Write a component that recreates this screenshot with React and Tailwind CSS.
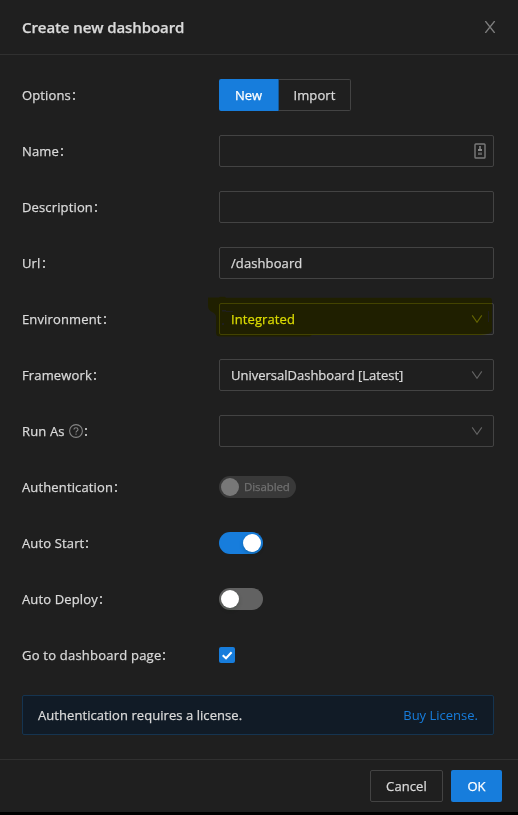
import React from "react";

function Row({ label, track = "tracking-[0.14px]", children }) {
  return (
    <div className="flex h-8 items-center">
      <div className="flex w-[197px] shrink-0 items-center">
        <span className={`whitespace-nowrap ${track}`}>{label}</span>
        <Colon />
      </div>
      {children}
    </div>
  );
}

function Colon() {
  return (
    <span className="ml-[2px] mt-[2px] flex flex-col gap-[4px]" aria-label=":">
      <i className="block h-[2px] w-[2px] bg-[#b4b4b4]" />
      <i className="block h-[2px] w-[2px] bg-[#b4b4b4]" />
    </span>
  );
}

function Field({ children }) {
  return (
    <div className="flex h-8 w-[275px] items-center justify-between rounded-[2px] border border-[#434343] pl-[11px] pr-[10px]">
      {children}
    </div>
  );
}

function Chevron() {
  return (
    <svg className="ml-auto" width="12" height="12" viewBox="0 0 12 12" fill="none" stroke="#646464" strokeWidth="1.1">
      <path d="M1.2 2.4 6 9.2l4.8-6.8" />
    </svg>
  );
}

function Highlight() {
  return (
    <svg className="pointer-events-none absolute left-[-11px] top-[-7px] mix-blend-multiply" width="286" height="42" viewBox="0 0 286 42">
      <path
        fill="#ffff00"
        fillRule="evenodd"
        d="M0 1.5H11L12 0.7H17L18 1.7H282Q284 2 284 4V35Q283 38.500 272 39H104L102 40.500H12Q8 40.500 8 37V21Q8 18 4 16Q0 14 0 10ZM14 14H18V15H25V16H18V15.500H14ZM14 27H16V29H14ZM280 15H281V26H280Z"
      />
    </svg>
  );
}

export default function App() {
  return (
    <div className="h-[815px] w-[518px] overflow-hidden bg-black font-['Open_Sans','Noto_Sans',sans-serif] text-[13px] leading-[22px] text-[#d9d9d9] [-webkit-text-stroke:0.25px]">
      <div className="flex h-[812px] flex-col bg-[#1f1f1f]">
        <header className="flex h-[55px] items-center justify-between border-b border-[#303030] px-[22px]">
          <h1 className="whitespace-nowrap text-[15px] font-semibold tracking-[-0.08px]">Create new dashboard</h1>
          <svg width="12" height="12" viewBox="0 0 12 12" fill="none" stroke="#7d7d7d" strokeWidth="1.3">
            <path d="M1.300 0 10.700 12M10.700 0 1.300 12" />
          </svg>
        </header>

        <main className="flex flex-col gap-6 pl-[22px] pr-6 pt-6">
          <Row label="Options">
            <div className="flex h-8">
              <button className="w-[60px] rounded-l-[2px] border-r border-[#165996] bg-[#177ddc] text-white">New</button>
              <button className="w-[72px] rounded-r-[2px] border border-l-0 border-[#434343] tracking-[0.1px]">Import</button>
            </div>
          </Row>
          <Row label="Name">
            <Field>
              <svg className="ml-auto mr-[-4px]" width="13" height="16" viewBox="0 0 13 16" fill="none">
                <rect x="1" y="1" width="10" height="14" rx="0.8" stroke="#7b7b7b" strokeWidth="1.4" />
                <path d="M6 3v3" stroke="#858585" strokeWidth="1.6" />
                <path d="M4 6h4v2H4z" fill="#858585" />
                <path d="M4 9.500h4V12H4z" fill="#5c5c5c" />
              </svg>
            </Field>
          </Row>
          <Row label="Description">
            <Field />
          </Row>
          <Row label="Url">
            <Field>
              <span className="tracking-[0.1px]">/dashboard</span>
            </Field>
          </Row>
          <Row label="Environment">
            <div className="relative">
              <Field>
                <span className="tracking-[0.1px]">Integrated</span>
                <Chevron />
              </Field>
              <Highlight />
            </div>
          </Row>
          <Row label="Framework">
            <Field>
              <span className="whitespace-nowrap">UniversalDashboard [Latest]</span>
              <Chevron />
            </Field>
          </Row>
          <Row
            label={
              <span className="flex items-center gap-[4.500px]">
                Run As
                <svg width="14" height="14" viewBox="0 0 14 14" fill="none" stroke="#858585" strokeWidth="1.1">
                  <circle cx="7" cy="7" r="6.400" />
                  <path d="M5 5.600C5 4.300 5.900 3.700 7 3.700s2 .7 2 1.800c0 1.300-2 1.500-2 3M7 9.600v1.200" />
                </svg>
              </span>
            }
          >
            <Field>
              <Chevron />
            </Field>
          </Row>
          <Row label="Authentication">
            <div className="flex h-[22px] w-[77px] items-center rounded-full bg-[#393939] pl-[2px] text-[11.500px] tracking-[-0.1px] text-[#707070]">
              <span className="mr-[5px] h-[18px] w-[18px] shrink-0 rounded-full bg-[#787878]" />
              <span>Disabled</span>
            </div>
          </Row>
          <Row label="Auto Start">
            <div className="flex h-[22px] w-11 items-center justify-end rounded-full bg-[#177ddc] px-[2px]">
              <span className="h-[18px] w-[18px] rounded-full bg-white shadow-[0_2px_4px_rgba(0,35,11,0.2)]" />
            </div>
          </Row>
          <Row label="Auto Deploy">
            <div className="flex h-[22px] w-11 items-center rounded-full bg-[#626262] px-[2px]">
              <span className="h-[18px] w-[18px] rounded-full bg-white shadow-[0_2px_4px_rgba(0,35,11,0.2)]" />
            </div>
          </Row>
          <Row label="Go to dashboard page" track="tracking-[0.22px]">
            <div className="flex h-4 w-4 items-center justify-center rounded-[2px] bg-[#177ddc]">
              <svg width="16" height="16" viewBox="0 0 16 16" fill="none" stroke="#fff" strokeWidth="2">
                <path d="M3.700 8.300 7 11.300 12.600 5.300" />
              </svg>
            </div>
          </Row>
          <div className="flex h-10 items-center justify-between rounded-[2px] border border-[#153450] bg-[#111b26] px-[15px]">
            <span className="tracking-[0.06px]">Authentication requires a license.</span>
            <span className="text-[#177ddc] [-webkit-text-stroke:0px]">Buy License.</span>
          </div>
        </main>

        <footer className="mt-auto flex h-[53px] justify-end gap-2 border-t border-[#303030] pr-4 pt-[10px]">
          <button className="h-8 w-[73px] rounded-[2px] border border-[#434343] tracking-[0.1px]">Cancel</button>
          <button className="h-8 w-[51px] rounded-[2px] bg-[#177ddc] text-white">OK</button>
        </footer>
      </div>
    </div>
  );
}
